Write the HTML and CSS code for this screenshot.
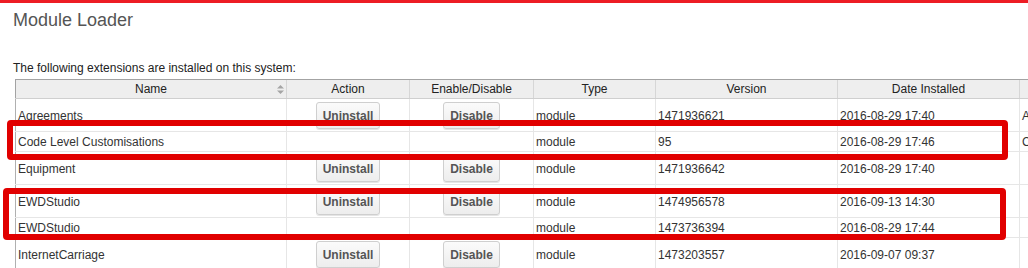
FILE: index.html
```html
<!DOCTYPE html>
<html lang="en">
<head>
  <meta charset="UTF-8">
  <meta name="viewport" content="width=device-width, initial-scale=1.0">
  <title>Module Loader</title>
  <link rel="stylesheet" href="styles.css">
</head>
<body>
  <div class="topbar"></div>
  <div class="content">
    <h1>Module Loader</h1>
    <p class="intro">The following extensions are installed on this system:</p>
    <table class="modules">
      <colgroup>
        <col class="c-name">
        <col class="c-action">
        <col class="c-enable">
        <col class="c-type">
        <col class="c-version">
        <col class="c-date">
        <col class="c-desc">
      </colgroup>
      <thead>
        <tr>
          <th class="sortable">Name
            <svg class="sort" width="7" height="9" viewBox="0 0 7 9"><path d="M3.5 0L7 3.5H0Z M0 5.5H7L3.5 9Z" fill="#a5a5a5"/></svg>
          </th>
          <th>Action</th>
          <th>Enable/Disable</th>
          <th>Type</th>
          <th>Version</th>
          <th>Date Installed</th>
          <th>Description</th>
        </tr>
      </thead>
      <tbody>
        <tr>
          <td>Agreements</td>
          <td class="btn-cell"><button class="btn">Uninstall</button></td>
          <td class="btn-cell"><button class="btn">Disable</button></td>
          <td>module</td>
          <td>1471936621</td>
          <td>2016-08-29 17:40</td>
          <td>Agreements module</td>
        </tr>
        <tr>
          <td>Code Level Customisations</td>
          <td></td>
          <td></td>
          <td>module</td>
          <td>95</td>
          <td>2016-08-29 17:46</td>
          <td>Customisations</td>
        </tr>
        <tr>
          <td>Equipment</td>
          <td class="btn-cell"><button class="btn">Uninstall</button></td>
          <td class="btn-cell"><button class="btn">Disable</button></td>
          <td>module</td>
          <td>1471936642</td>
          <td>2016-08-29 17:40</td>
          <td></td>
        </tr>
        <tr>
          <td>EWDStudio</td>
          <td class="btn-cell"><button class="btn">Uninstall</button></td>
          <td class="btn-cell"><button class="btn">Disable</button></td>
          <td>module</td>
          <td>1474956578</td>
          <td>2016-09-13 14:30</td>
          <td></td>
        </tr>
        <tr>
          <td>EWDStudio</td>
          <td></td>
          <td></td>
          <td>module</td>
          <td>1473736394</td>
          <td>2016-08-29 17:44</td>
          <td></td>
        </tr>
        <tr>
          <td>InternetCarriage</td>
          <td class="btn-cell"><button class="btn">Uninstall</button></td>
          <td class="btn-cell"><button class="btn">Disable</button></td>
          <td>module</td>
          <td>1473203557</td>
          <td>2016-09-07 09:37</td>
          <td></td>
        </tr>
      </tbody>
    </table>
  </div>
  <!-- annotation boxes drawn over the table -->
  <div class="mark mark-one"></div>
  <div class="mark mark-two"></div>
</body>
</html>
```

FILE: styles.css
```css
html, body{
  margin: 0;
  padding: 0;
  background: #fff;
  overflow: hidden;
}
body{
  position: relative;
  font-family: "Liberation Sans", Arial, Helvetica, sans-serif;
  font-size: 12px;
  color: #333;
}
.topbar{
  height: 3px;
  background-color: #ed1c24;
}
.content{
  padding: 0 0 0 13px;
  overflow: hidden;
}
.content h1{
  margin: 7px 0 0;
  font-size: 18px;
  line-height: 20px;
  font-weight: normal;
  color: #555;
}
.intro{
  margin: 31px 0 4px;
  line-height: 14px;
  color: #222;
}
.modules{
  margin-left: 2px;
  border-collapse: collapse;
  table-layout: fixed;
  width: 1154px;
}
.modules .c-name{ width: 271px; }
.modules .c-action{ width: 123px; }
.modules .c-enable{ width: 124px; }
.modules .c-type{ width: 122px; }
.modules .c-version{ width: 182px; }
.modules .c-date{ width: 182px; }
.modules .c-desc{ width: 150px; }

.modules th{
  position: relative;
  padding: 2px 3px;
  line-height: 14px;
  font-weight: normal;
  color: #222;
  text-align: center;
  background-color: #eee;
  border-top: 1px solid #a3a3a3;
  border-bottom: 1px solid #cfcfcf;
  border-left: 1px solid #d6d6d6;
  white-space: nowrap;
}
.modules th:first-child{
  border-left: 1px solid #a3a3a3;
}
.modules th .sort{
  position: absolute;
  right: 2px;
  top: 5px;
}
.modules td{
  padding: 3px 3px 2px 2px;
  line-height: 14px;
  vertical-align: middle;
  border-bottom: 1px solid #e6e6e6;
  border-left: 1px solid #e6e6e6;
  white-space: nowrap;
  overflow: hidden;
}
.modules td:first-child{
  border-left: 1px solid #b0b0b0;
}
.modules .btn-cell{
  padding: 3px 2px 2px;
  text-align: center;
}
.btn{
  height: 27px;
  padding: 0 6px;
  font-family: inherit;
  font-size: 12px;
  font-weight: bold;
  color: #555;
  background: linear-gradient(#fbfbfb, #ededed);
  border: 1px solid #cfcfcf;
  border-radius: 3px;
  box-shadow: 0 1px 0 rgba(0, 0, 0, .1);
  vertical-align: middle;
  cursor: pointer;
}

.mark{
  position: absolute;
  box-sizing: border-box;
  border: 6px solid #e10000;
  border-radius: 4px;
}
.mark-one{
  left: 7px;
  top: 120px;
  width: 1001px;
  height: 40px;
}
.mark-two{
  left: 3px;
  top: 188px;
  width: 1003px;
  height: 52px;
}
```
